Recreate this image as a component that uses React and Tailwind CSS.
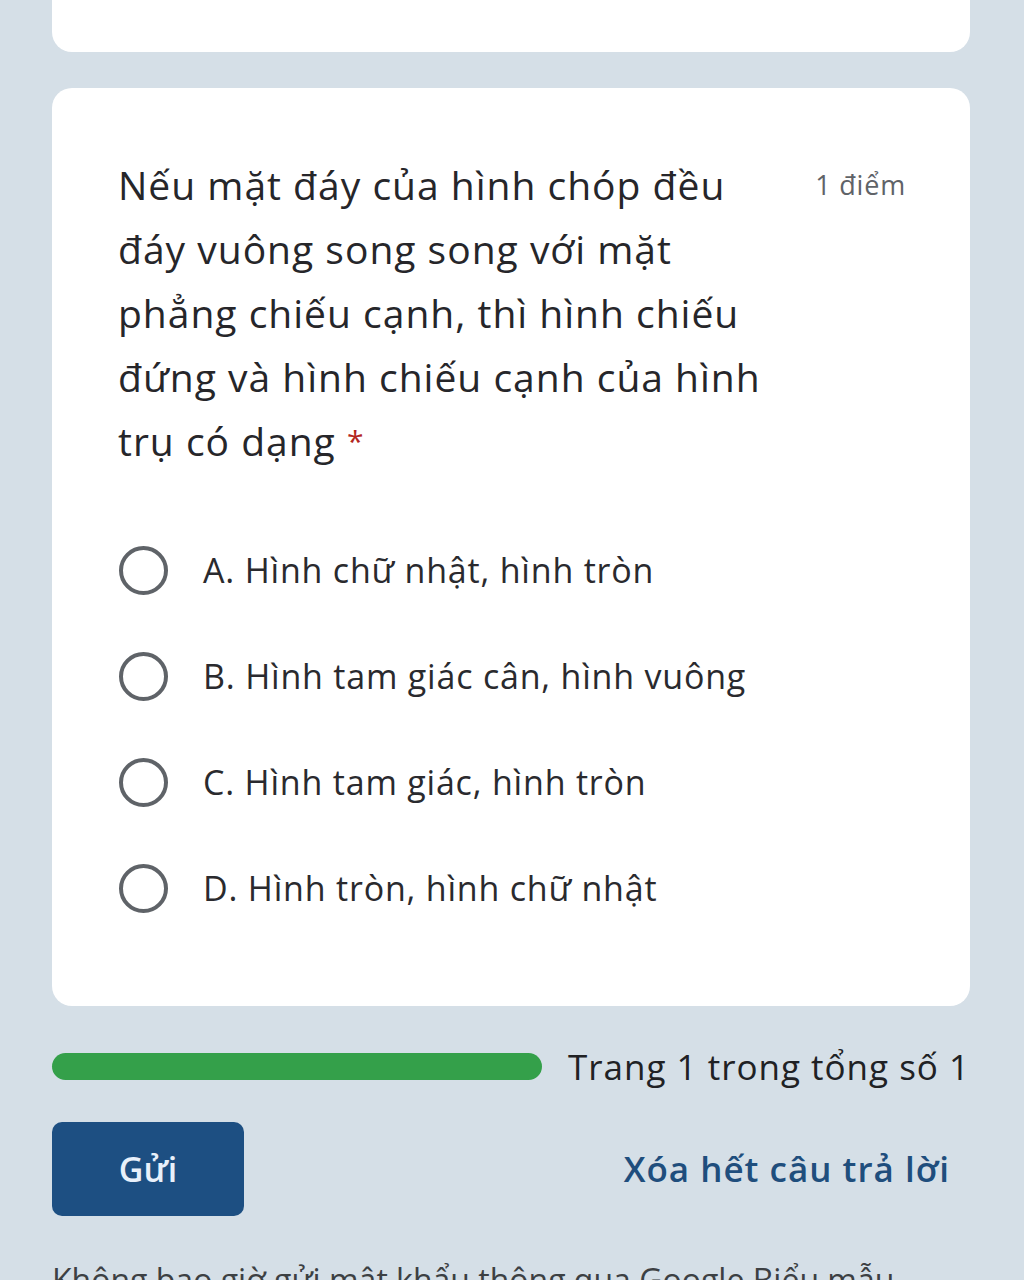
export default function App() {
  const options = [
    "A. Hình chữ nhật, hình tròn",
    "B. Hình tam giác cân, hình vuông",
    "C. Hình tam giác, hình tròn",
    "D. Hình tròn, hình chữ nhật",
  ];
  return (
    <div className="w-[1024px] h-[1280px] overflow-hidden bg-[#d5dfe7] font-['Open_Sans','Noto_Sans',sans-serif] text-[#202124]">
      <div className="pl-[52px] pr-[54px] flex flex-col">
        <div className="h-[52px] bg-white rounded-b-[20px]" />
        <div className="mt-[36px] h-[918px] bg-white rounded-[20px] pl-[66px] pr-[64px] pt-[65px]">
          <div className="flex items-start justify-between">
            <div className="text-[39px] leading-[64px] tracking-[1px] text-[#26262a]">
              Nếu mặt đáy của hình chóp đều
              <br />
              đáy vuông song song với mặt
              <br />
              phẳng chiếu cạnh, thì hình chiếu
              <br />
              đứng và hình chiếu cạnh của hình
              <br />
              trụ có dạng <span className="text-[#b3261e] text-[30px] align-top">*</span>
            </div>
            <div className="mt-[16px] text-[27px] leading-[32px] text-[#5f6368] tracking-[0.8px]">1 điểm</div>
          </div>
          <div className="mt-[73px] flex flex-col gap-[58px]">
            {options.map((o) => (
              <div key={o} className="flex items-center h-[48px]">
                <div className="ml-[1px] w-[49px] h-[49px] rounded-full border-[4px] border-[#5f6368] shrink-0" />
                <div className="ml-[35px] text-[34px] leading-[48px] font-medium tracking-[0.8px] text-[#2a2a2e]">{o}</div>
              </div>
            ))}
          </div>
        </div>
        <div className="mt-[47px] flex items-center h-[27px]">
          <div className="w-[490px] h-[27px] rounded-full bg-[#34a04a]" />
          <div className="ml-auto text-[35px] leading-[40px] tracking-[1px] text-[#202124]">Trang 1 trong tổng số 1</div>
        </div>
        <div className="mt-[42px] flex items-center">
          <div className="w-[192px] h-[94px] rounded-[10px] bg-[#1d4f82] flex items-center justify-center text-[34px] font-semibold text-[#e8f0fa]">Gửi</div>
          <div className="ml-auto mr-[20px] text-[35px] font-semibold text-[#1f4e7d] tracking-[1px]">Xóa hết câu trả lời</div>
        </div>
        <div className="mt-[44px] text-[32px] leading-[40px] text-[#3c4043] whitespace-nowrap">Không bao giờ gửi mật khẩu thông qua Google Biểu mẫu.</div>
      </div>
    </div>
  );
}
